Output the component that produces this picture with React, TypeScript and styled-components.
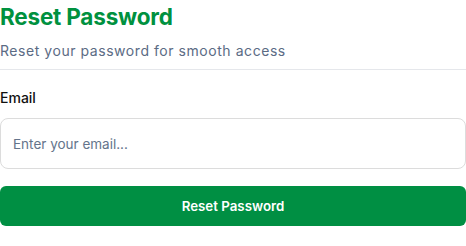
import React from "react";
import styled, { createGlobalStyle } from "styled-components";

const Global = createGlobalStyle`
  html, body { margin: 0; padding: 0; background: #ffffff; }
  body { font-family: "Inter", "Lato", sans-serif; }
  * { box-sizing: border-box; }
`;

const Wrapper = styled.div`
  width: 466px;
  display: flex;
  flex-direction: column;
`;

const Header = styled.div`
  display: flex;
  flex-direction: column;
  padding-bottom: 8px;
  border-bottom: 1px solid #e5e7eb;
`;

const Title = styled.h1`
  margin: 0;
  padding-top: 3px;
  font-size: 22.5px;
  line-height: 28px;
  font-weight: 700;
  color: #00913f;
  letter-spacing: -0.2px;
`;

const Subtitle = styled.p`
  margin: 10px 0 0;
  font-size: 14px;
  line-height: 20px;
  letter-spacing: 0.55px;
  color: #5b6b84;
`;

const Form = styled.form`
  display: flex;
  flex-direction: column;
  padding-top: 18px;
`;

const Label = styled.label`
  font-size: 14px;
  line-height: 20px;
  font-weight: 500;
  color: #111111;
`;

const Input = styled.input`
  margin-top: 10px;
  height: 51px;
  width: 100%;
  border: 1px solid #dcdcdc;
  border-radius: 8px;
  padding: 0 12px;
  font-family: inherit;
  font-size: 13.5px;
  color: #111;
  outline: none;
  &::placeholder { color: #64748b; }
`;

const Button = styled.button`
  margin-top: 17px;
  height: 40px;
  width: 100%;
  border: none;
  border-radius: 6px;
  background: #008f43;
  color: #ffffff;
  font-family: inherit;
  font-size: 13.3px;
  font-weight: 600;
  cursor: pointer;
`;

export default function App() {
  return (
    <>
      <Global />
      <Wrapper>
        <Header>
          <Title>Reset Password</Title>
          <Subtitle>Reset your password for smooth access</Subtitle>
        </Header>
        <Form onSubmit={(e) => e.preventDefault()}>
          <Label htmlFor="email">Email</Label>
          <Input id="email" type="email" placeholder="Enter your email..." />
          <Button type="submit">Reset Password</Button>
        </Form>
      </Wrapper>
    </>
  );
}
